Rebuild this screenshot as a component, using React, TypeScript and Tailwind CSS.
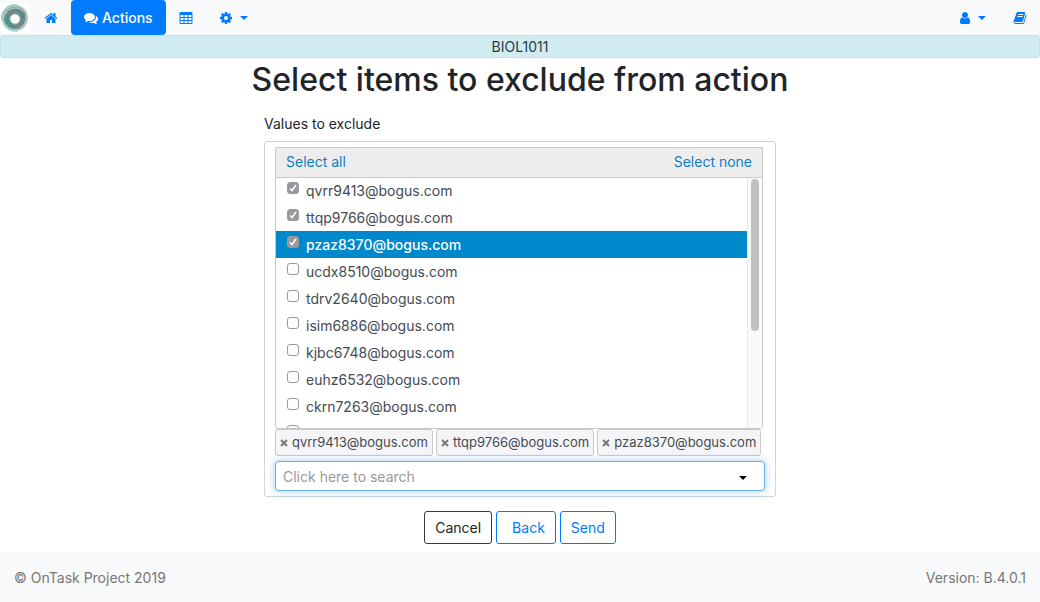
import { useState, type ReactNode } from 'react';
import clsx from 'clsx';

const EMAILS = [
  'qvrr9413@bogus.com',
  'ttqp9766@bogus.com',
  'pzaz8370@bogus.com',
  'ucdx8510@bogus.com',
  'tdrv2640@bogus.com',
  'isim6886@bogus.com',
  'kjbc6748@bogus.com',
  'euhz6532@bogus.com',
  'ckrn7263@bogus.com',
  'xvnf7323@bogus.com',
];

const ICONS = {
  home: 'M1472 992v480q0 26-19 45t-45 19h-384v-384h-256v384h-384q-26 0-45-19t-19-45v-480q0-1 .5-3t.5-3l575-474 575 474q1 2 1 6zm223-69l-62 74q-8 9-21 11h-3q-13 0-21-7l-692-577-692 577q-12 8-24 7-13-2-21-11l-62-74q-8-10-7-23.5t11-21.5l719-599q32-26 76-26t76 26l244 204v-195q0-14 9-23t23-9h192q14 0 23 9t9 23v408l219 182q10 8 11 21.5t-7 23.5z',
  comments:
    'M1408 768q0 139-94 257t-256.5 186.5-353.5 68.5q-86 0-176-16-124 88-278 128-36 9-86 16h-3q-11 0-20.5-8t-11.5-21q-1-3-1-6.5t.5-6.5 2-6l2.5-5 3.5-5.5 4-5 4.5-5 4-4.5q5-6 23-25t26-29.5 22.5-29 25-38.5 20.5-44q-124-72-195-177t-71-224q0-139 94-257t256.5-186.5 353.5-68.5 353.5 68.5 256.5 186.5 94 257zm384 256q0 120-71 224.5t-195 176.5q10 24 20.5 44t25 38.5 22.5 29 26 29.5 23 25q1 1 4 4.5t4.5 5 4 5 3.5 5.5l2.5 5 2 6 .5 6.5-1 6.5q-3 14-13 22t-22 7q-50-7-86-16-154-40-278-128-90 16-176 16-271 0-472-132 58 4 88 4 161 0 309-45t264-129q125-92 192-212t67-254q0-77-23-152 129 71 204 178t75 230z',
  table:
    'M224 128h1344q160 0 160 160v1216q0 160-160 160h-1344q-160 0-160-160v-1216q0-160 160-160zM192 512v256h384v-256zM704 512v256h384v-256zM1216 512v256h384v-256zM192 896v256h384v-256zM704 896v256h384v-256zM1216 896v256h384v-256zM192 1280v256h384v-256zM704 1280v256h384v-256zM1216 1280v256h384v-256z',
  cog: 'M1152 896q0-106-75-181t-181-75-181 75-75 181 75 181 181 75 181-75 75-181zm512-109v222q0 12-8 23t-20 13l-185 28q-19 54-39 91 35 50 107 138 10 12 10 25t-9 23q-27 37-99 108t-94 71q-12 0-26-9l-138-108q-44 23-91 38-16 136-29 186-7 28-36 28h-222q-14 0-24.5-8.5t-11.5-21.5l-28-184q-49-16-90-37l-141 107q-10 9-25 9-14 0-25-11-126-114-165-168-7-10-7-23 0-12 8-23 15-21 51-66.5t54-70.5q-27-50-41-99l-183-27q-13-2-21-12.5t-8-23.5v-222q0-12 8-23t19-13l186-28q14-46 39-92-40-57-107-138-10-12-10-24 0-10 9-23 26-36 98.5-107.5t94.5-71.5q13 0 26 10l138 107q44-23 91-38 16-136 29-186 7-28 36-28h222q14 0 24.5 8.5t11.5 21.5l28 184q49 16 90 37l142-107q9-9 24-9 13 0 25 10 129 119 165 170 7 8 7 22 0 12-8 23-15 21-51 66.5t-54 70.5q26 50 41 98l183 28q13 2 21 12.5t8 23.5z',
  user: 'M1536 1399q0 109-62.5 187t-150.5 78h-854q-88 0-150.5-78t-62.5-187q0-85 8.5-160.5t31.5-152 58.5-131 94-89 134.5-34.5q131 128 313 128t313-128q76 0 134.5 34.5t94 89 58.5 131 31.5 152 8.5 160.5zm-256-887q0 159-112.5 271.5t-271.5 112.5-271.5-112.5-112.5-271.5 112.5-271.5 271.5-112.5 271.5 112.5 112.5 271.5z',
  book: 'M1703 478q40 57 18 129l-275 906q-19 64-76.5 107.5t-122.5 43.5h-923q-77 0-148.5-53.5t-99.5-131.5q-24-67-2-127 0-4 3-27t4-37q1-8-3-21.5t-3-19.5q2-11 8-21t16.5-23.5 16.5-23.5q23-38 45-91.5t30-91.5q3-10 .5-30t-.5-28q3-11 17-28t17-23q21-36 42-92t25-90q1-9-2.5-32t.5-28q4-13 22-30.5t22-22.5q19-26 42.5-84.5t27.5-96.5q1-8-3-25.5t-2-26.5q2-8 9-18t18-23 17-21q8-12 16.5-30.5t15-35 16-36 19.5-32 26.5-23.5 36-11.5 47.5 5.5l-1 3q38-9 51-9h761q74 0 114 56t18 130l-274 906q-36 119-71.5 153.5t-128.5 34.5h-869q-27 0-38 15-11 16-1 43 24 70 144 70h923q29 0 56-15.5t35-41.5l300-987q7-22 5-57 38 15 59 43zm-1064 2q-4 13 2 22.5t20 9.5h608q13 0 25.5-9.5t16.5-22.5l21-64q4-13-2-22.5t-20-9.5h-608q-13 0-25.5 9.5t-16.5 22.5zm-83 256q-4 13 2 22.5t20 9.5h608q13 0 25.5-9.5t16.5-22.5l21-64q4-13-2-22.5t-20-9.5h-608q-13 0-25.5 9.5t-16.5 22.5z',
};

function Icon({ name }: { name: keyof typeof ICONS }) {
  return (
    <svg viewBox="0 0 1792 1792" className="size-[14px]" fill="currentColor" fillRule="evenodd" aria-hidden="true">
      <path d={ICONS[name]} />
    </svg>
  );
}

function Caret() {
  return (
    <svg viewBox="0 0 8 4" className="h-1 w-2" fill="currentColor" aria-hidden="true">
      <path d="M0 0h8L4 4z" />
    </svg>
  );
}

function Logo() {
  return (
    <svg viewBox="0 0 30 30" className="size-[30px]" fill="none" aria-hidden="true">
      <path fill="#fff" d="M0 0h30v30H0z" />
      <circle cx="15" cy="15" r="13" fill="#b3c3c3" />
      <circle cx="15" cy="15" r="11" fill="#71898a" />
      <path d="M2 18A13 13 0 0 1 17 2" stroke="#5fd0bd" strokeWidth="1" />
      <path d="M3 20A13 13 0 0 0 18 28" stroke="#8fdccd" strokeWidth="1" />
      <path d="M5 15A10 10 0 0 1 23 9" stroke="#b9dbd7" strokeWidth="1" />
      <path d="M7 12A9 9 0 0 0 13 23" stroke="#46978c" strokeWidth="3" />
      <path d="M17 7A9 9 0 0 1 23 16" stroke="#4b8d86" strokeWidth="2" />
      <path d="M26 12A12 12 0 0 1 20 25" stroke="#c3c9ca" strokeWidth="1" />
      <circle cx="15" cy="16" r="5" fill="#fff" stroke="#a5bcba" strokeWidth="1" />
    </svg>
  );
}

function NavLink({ label, className, children }: { label: string; className?: string; children: ReactNode }) {
  return (
    <a href="#" aria-label={label} className={clsx('flex h-full items-center', className)}>
      {children}
    </a>
  );
}

const outlineButton = 'h-[33px] rounded-[3px] border bg-white px-[10px] text-[14px]';

export default function App() {
  const [checked, setChecked] = useState(EMAILS.slice(0, 3));

  const toggle = (email: string) =>
    setChecked((prev) => (prev.includes(email) ? prev.filter((e) => e !== email) : [...prev, email]));

  return (
    <div className="flex min-h-screen flex-col bg-white font-['Inter',sans-serif] text-[14px] leading-[21px] text-[#212529]">
      <nav className="flex h-[35px] items-center bg-[#f8f9fa] text-[#007bff]">
        <NavLink label="OnTask">
          <Logo />
        </NavLink>
        <NavLink label="Home" className="pr-[13px] pl-[14px]">
          <Icon name="home" />
        </NavLink>
        <NavLink label="Actions" className="gap-1 rounded bg-[#007bff] px-[13px] font-medium text-white">
          <Icon name="comments" />
          Actions
        </NavLink>
        <NavLink label="Table" className="px-[13px]">
          <Icon name="table" />
        </NavLink>
        <NavLink label="Settings" className="gap-[7px] px-[13px]">
          <Icon name="cog" />
          <Caret />
        </NavLink>
        <NavLink label="Account" className="ml-auto gap-[6px] px-[14px]">
          <Icon name="user" />
          <Caret />
        </NavLink>
        <NavLink label="Documentation" className="px-[13px]">
          <Icon name="book" />
        </NavLink>
      </nav>

      <div className="rounded-[3px] border border-[#bee5eb] bg-[#d1ecf1] text-center text-[#2b3a3f]">BIOL1011</div>

      <main className="flex flex-1 flex-col items-center">
        <h1 className="text-center text-[32px] font-medium leading-[44px]">Select items to exclude from action</h1>

        <form className="w-full max-w-lg" onSubmit={(e) => e.preventDefault()}>
          <label htmlFor="search" className="mt-[11px] mb-[7px] block">
            Values to exclude
          </label>

          <div className="rounded-[3px] border border-[#ced4da] px-[10px] py-[5px] text-[#444b52]">
            <div className="mr-[2px] rounded-b-[3px] border border-[#c8c8c8]">
              <div className="flex h-[30px] items-center justify-between border-b border-[#c8c8c8] bg-[#ededed] px-[10px] pb-[2px] text-[#0f7fc4]">
                <button type="button" onClick={() => setChecked(EMAILS)}>
                  Select all
                </button>
                <button type="button" onClick={() => setChecked([])}>
                  Select none
                </button>
              </div>
              <div className="flex h-[250px] overflow-hidden">
                <ul className="-mt-px flex-1">
                  {EMAILS.map((email) => {
                    const active = email === 'pzaz8370@bogus.com';
                    return (
                      <li key={email} className={clsx('h-[27px]', active && 'bg-[#0088cc] font-medium text-white')}>
                        <label className="flex gap-[7px] px-[11px]">
                          <input
                            type="checkbox"
                            checked={checked.includes(email)}
                            onChange={() => toggle(email)}
                            className="mt-[5px] size-3 appearance-none rounded-[3px] border border-[#9b9b9f] bg-white bg-center checked:bg-[#98989d] checked:bg-[url('data:image/svg+xml,%3Csvg%20xmlns=%22http://www.w3.org/2000/svg%22%20viewBox=%220%200%2010%2010%22%3E%3Cpath%20d=%22M2%205.5l2%202L8%202%22%20fill=%22none%22%20stroke=%22white%22%20stroke-width=%221.6%22/%3E%3C/svg%3E')]"
                          />
                          <span className="leading-[27px]">{email}</span>
                        </label>
                      </li>
                    );
                  })}
                </ul>
                <div className="w-[15px] border-l border-[#e8e8e8] bg-[#fafafa] pt-px pl-[3px]">
                  <div className="h-[152px] w-2 rounded-full bg-[#c1c1c1]" />
                </div>
              </div>
            </div>

            <ul className="mb-[5px] flex flex-wrap gap-[3px] text-[13px]">
              {checked.map((email) => (
                <li
                  key={email}
                  className="flex h-[27px] items-center gap-1 rounded-[3px] border border-[#c8c8c8] bg-[#f5f5f8] px-1"
                >
                  <button type="button" aria-label={`Remove ${email}`} onClick={() => toggle(email)}>
                    <svg viewBox="0 0 8 8" className="size-2" stroke="#777" strokeWidth="2" aria-hidden="true">
                      <path d="M1 1l6 6M7 1L1 7" />
                    </svg>
                  </button>
                  {email}
                </li>
              ))}
            </ul>

            <div className="relative">
              <input
                id="search"
                placeholder="Click here to search"
                className="block h-[30px] w-full rounded-[3px] border border-[#66afe9] bg-white px-[7px] shadow-[0_0_8px_rgba(102,175,233,0.6)] outline-none placeholder:text-[#999]"
              />
              <span className="pointer-events-none absolute top-[15px] right-[18px] text-black">
                <Caret />
              </span>
            </div>
          </div>

          <div className="mt-[14px] mb-2 flex justify-center gap-1">
            <button type="button" className={clsx(outlineButton, 'border-[#343a40]')}>
              Cancel
            </button>
            <button type="button" className={clsx(outlineButton, 'border-[#007bff] pl-[15px] text-[#007bff]')}>
              Back
            </button>
            <button type="submit" className={clsx(outlineButton, 'border-[#007bff] text-[#007bff]')}>
              Send
            </button>
          </div>
        </form>
      </main>

      <footer className="flex h-[50px] items-center justify-between bg-[#f8f9fa] px-[14px] text-[#777]">
        <span>© OnTask Project 2019</span>
        <span>Version: B.4.0.1</span>
      </footer>
    </div>
  );
}
